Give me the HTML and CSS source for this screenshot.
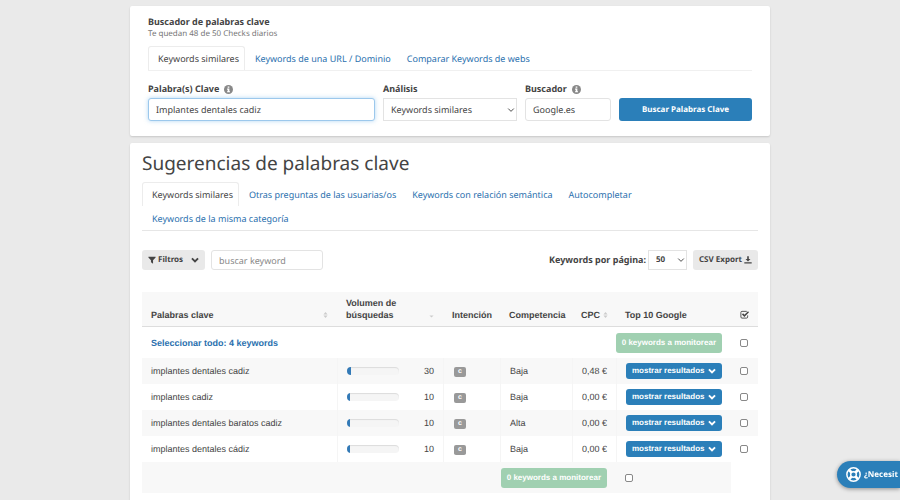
FILE: index.html
```html
<!DOCTYPE html>
<html lang="es">
<head>
    <meta charset="UTF-8">
    <meta name="viewport" content="width=device-width, initial-scale=1.0">
    <title>Buscador de palabras clave</title>
    <link rel="stylesheet" href="styles.css">
</head>
<body>
<svg class="sprite" aria-hidden="true">
    <symbol id="icon-info" viewBox="0 0 16 16">
        <circle cx="8" cy="8" r="8" fill="currentColor"/>
        <path d="M6.5 2.6h3v2.4h-3zM5.5 6.3h4v4.8h1.2v2H5.4v-2h1.2V8.3H5.5z" fill="#fff"/>
    </symbol>
    <symbol id="icon-arrow" viewBox="0 0 10 10">
        <path d="M1.500 3.200L5 6.700l3.500-3.500" fill="none" stroke="currentColor" stroke-width="1.200"/>
    </symbol>
    <symbol id="icon-chevron" viewBox="0 0 10 10">
        <path d="M1.200 3L5 6.800 8.800 3" fill="none" stroke="currentColor" stroke-width="2.400"/>
    </symbol>
    <symbol id="icon-filter" viewBox="0 0 10 10">
        <path d="M.5.8h9v1.200L6.300 5.300v4.400L3.700 7.900V5.300L.5 2z" fill="currentColor"/>
    </symbol>
    <symbol id="icon-download" viewBox="0 0 10 10">
        <path d="M4 .3h2v3.500h2.100L5 7 1.900 3.800H4zM.4 7.700h9.200v1.700H.4z" fill="currentColor"/>
    </symbol>
    <symbol id="icon-sort" viewBox="0 0 6 8">
        <path d="M3 0.500l2.500 3h-5zM3 7.500l2.500-3h-5z" fill="currentColor"/>
    </symbol>
    <symbol id="icon-sort-desc" viewBox="0 0 6 8">
        <path d="M3 7l2.500-2.500h-5z" fill="currentColor"/>
    </symbol>
    <symbol id="icon-check" viewBox="0 0 10 10">
        <path d="M7.500 1.500H2.200Q1 1.500 1 2.700v5Q1 9 2.200 9h5Q8.500 9 8.500 7.700V6" fill="none" stroke="currentColor"/>
        <path d="M2.800 4.300l2.100 2.200 4.600-4.600" fill="none" stroke="currentColor" stroke-width="1.700"/>
    </symbol>
    <symbol id="icon-help" viewBox="0 0 16 16">
        <circle cx="8" cy="8" r="7.100" fill="none" stroke="currentColor" stroke-width="1.600"/>
        <circle cx="8" cy="8" r="3" fill="none" stroke="currentColor" stroke-width="1.500"/>
        <path d="M3.300 3.300L6 6M12.700 3.300L10 6M3.300 12.700L6 10M12.700 12.700L10 10" stroke="currentColor" stroke-width="3"/>
    </symbol>
</svg>

<main class="container">
    <section class="panel search-panel">
        <h2 class="panel-title">Buscador de palabras clave</h2>
        <p class="panel-subtitle">Te quedan 48 de 50 Checks diarios</p>
        <nav class="tabs">
            <a href="#" class="tab active">Keywords similares</a>
            <a href="#" class="tab">Keywords de una URL / Dominio</a>
            <a href="#" class="tab">Comparar Keywords de webs</a>
        </nav>
        <form class="search-form">
            <div class="field">
                <label for="keyword">Palabra(s) Clave <svg class="icon-info"><use href="#icon-info"/></svg></label>
                <input type="text" id="keyword" class="control focused" value="Implantes dentales cadiz">
            </div>
            <div class="field">
                <label for="analysis">Análisis</label>
                <div class="select">
                    <select id="analysis" class="control">
                        <option>Keywords similares</option>
                    </select>
                    <svg class="select-arrow"><use href="#icon-arrow"/></svg>
                </div>
            </div>
            <div class="field">
                <label for="engine">Buscador <svg class="icon-info"><use href="#icon-info"/></svg></label>
                <input type="text" id="engine" class="control" value="Google.es">
            </div>
            <button type="button" class="btn btn-primary">Buscar Palabras Clave</button>
        </form>
    </section>

    <section class="panel results-panel">
        <h1>Sugerencias de palabras clave</h1>
        <nav class="tabs">
            <a href="#" class="tab active">Keywords similares</a>
            <a href="#" class="tab">Otras preguntas de las usuarias/os</a>
            <a href="#" class="tab">Keywords con relación semántica</a>
            <a href="#" class="tab">Autocompletar</a>
            <a href="#" class="tab">Keywords de la misma categoría</a>
        </nav>

        <div class="toolbar">
            <button type="button" class="btn btn-default">
                <svg class="icon"><use href="#icon-filter"/></svg>
                <span>Filtros</span>
                <svg class="icon icon-end"><use href="#icon-chevron"/></svg>
            </button>
            <input type="text" class="control filter-input" placeholder="buscar keyword" aria-label="buscar keyword">
            <div class="page-field">
                <label for="page-size">Keywords por página:</label>
                <div class="select page-size">
                    <select id="page-size" class="control">
                        <option>50</option>
                    </select>
                    <svg class="select-arrow"><use href="#icon-arrow"/></svg>
                </div>
            </div>
            <button type="button" class="btn btn-default">
                <span>CSV Export</span>
                <svg class="icon"><use href="#icon-download"/></svg>
            </button>
        </div>

        <table class="keywords">
            <colgroup>
                <col>
                <col class="col-volume">
                <col class="col-intent">
                <col class="col-competition">
                <col class="col-cpc">
                <col class="col-top">
                <col class="col-check">
            </colgroup>
            <thead>
                <tr>
                    <th><div class="head">Palabras clave <svg class="icon-sort"><use href="#icon-sort"/></svg></div></th>
                    <th><div class="head">Volumen de búsquedas <svg class="icon-sort"><use href="#icon-sort-desc"/></svg></div></th>
                    <th>Intención</th>
                    <th>Competencia</th>
                    <th><div class="head head-cpc">CPC <svg class="icon-sort"><use href="#icon-sort"/></svg></div></th>
                    <th>Top 10 Google</th>
                    <th><svg class="icon-check"><use href="#icon-check"/></svg></th>
                </tr>
            </thead>
            <tbody>
                <tr class="select-row">
                    <td colspan="6">
                        <div class="select-all">
                            <a href="#">Seleccionar todo: 4 keywords</a>
                            <button type="button" class="btn btn-success">0 keywords a monitorear</button>
                        </div>
                    </td>
                    <td><input type="checkbox" aria-label="Seleccionar todo"></td>
                </tr>
                <tr class="striped">
                    <td>implantes dentales cadiz</td>
                    <td><div class="volume"><div class="bar"><div class="bar-fill" style="width: 8%"></div></div><span>30</span></div></td>
                    <td><span class="badge">c</span></td>
                    <td>Baja</td>
                    <td class="number">0,48 €</td>
                    <td><button type="button" class="btn btn-primary btn-results">mostrar resultados <svg class="icon"><use href="#icon-chevron"/></svg></button></td>
                    <td><input type="checkbox" aria-label="implantes dentales cadiz"></td>
                </tr>
                <tr>
                    <td>implantes cadiz</td>
                    <td><div class="volume"><div class="bar"><div class="bar-fill" style="width: 6%"></div></div><span>10</span></div></td>
                    <td><span class="badge">c</span></td>
                    <td>Baja</td>
                    <td class="number">0,00 €</td>
                    <td><button type="button" class="btn btn-primary btn-results">mostrar resultados <svg class="icon"><use href="#icon-chevron"/></svg></button></td>
                    <td><input type="checkbox" aria-label="implantes cadiz"></td>
                </tr>
                <tr class="striped">
                    <td>implantes dentales baratos cadiz</td>
                    <td><div class="volume"><div class="bar"><div class="bar-fill" style="width: 6%"></div></div><span>10</span></div></td>
                    <td><span class="badge">c</span></td>
                    <td>Alta</td>
                    <td class="number">0,00 €</td>
                    <td><button type="button" class="btn btn-primary btn-results">mostrar resultados <svg class="icon"><use href="#icon-chevron"/></svg></button></td>
                    <td><input type="checkbox" aria-label="implantes dentales baratos cadiz"></td>
                </tr>
                <tr>
                    <td>implantes dentales cádiz</td>
                    <td><div class="volume"><div class="bar"><div class="bar-fill" style="width: 6%"></div></div><span>10</span></div></td>
                    <td><span class="badge">c</span></td>
                    <td>Baja</td>
                    <td class="number">0,00 €</td>
                    <td><button type="button" class="btn btn-primary btn-results">mostrar resultados <svg class="icon"><use href="#icon-chevron"/></svg></button></td>
                    <td><input type="checkbox" aria-label="implantes dentales cádiz"></td>
                </tr>
                <tr class="striped select-row">
                    <td colspan="5" class="number"><button type="button" class="btn btn-success">0 keywords a monitorear</button></td>
                    <td><input type="checkbox" aria-label="Seleccionar todo"></td>
                </tr>
            </tbody>
        </table>
    </section>
</main>

<button type="button" class="help-button">
    <svg class="icon-help"><use href="#icon-help"/></svg>
    <span>¿Necesit</span>
</button>
</body>
</html>
```
FILE: styles.css
```css
* {
    box-sizing: border-box;
}

body {
    margin: 0;
    background-color: #eaeaea;
    color: #444;
    font-family: "Noto Sans", sans-serif;
    font-size: 9px;
    line-height: 12px;
    text-rendering: geometricPrecision;
}

a {
    color: #2a70ae;
    text-decoration: none;
}

h1,
h2,
p {
    margin: 0;
}

input,
select,
button {
    font: inherit;
    color: inherit;
    text-rendering: inherit;
}

.sprite {
    display: none;
}

.container {
    display: flex;
    flex-direction: column;
    gap: 7px;
    max-width: 640px;
    min-height: 100vh;
    margin: 0 auto;
    padding-top: 6px;
}

.panel {
    background-color: #fff;
    border-radius: 2px;
    box-shadow: 0 1px 2px rgba(0, 0, 0, 0.15);
}

.search-panel {
    padding: 10px 18px 15px;
}

.results-panel {
    flex: 1;
    padding: 6px 12px 12px;
}

.panel-title {
    font-size: 9px;
    font-weight: bold;
}

.panel-subtitle {
    color: #777;
    font-size: 8px;
}

h1 {
    font-size: 19px;
    font-weight: normal;
    line-height: 28px;
}

/* Tabs */
.tabs {
    display: flex;
    flex-wrap: wrap;
    border-bottom: 1px solid #f0f0f0;
}

.search-panel .tabs {
    margin-top: 6px;
}

.results-panel .tabs {
    margin-top: 5px;
    border-color: #e6e6e6;
}

.tab {
    padding: 6px 5px 5px 9px;
    border: 1px solid transparent;
    border-bottom: 0;
    border-radius: 3px 3px 0 0;
}

.tab.active {
    color: #444;
    border-color: #ececec;
}

/* Controls */
.search-form {
    display: grid;
    grid-template-columns: 227fr 134fr 86fr 133fr;
    gap: 8px;
    align-items: end;
    margin-top: 12px;
}

.field label {
    display: flex;
    align-items: center;
    gap: 5px;
    margin-bottom: 3px;
    font-weight: bold;
}

.control {
    display: block;
    width: 100%;
    height: 23px;
    padding: 0 7px;
    background-color: #fff;
    border: 1px solid #e3e3e3;
    border-radius: 3px;
    outline: none;
}

.control.focused {
    border-color: #9cc8ec;
    box-shadow: 0 0 4px rgba(102, 175, 233, 0.5);
}

.select {
    position: relative;
}

.select .control {
    appearance: none;
    border-radius: 0;
}

.select-arrow {
    position: absolute;
    top: 50%;
    right: 2px;
    width: 8px;
    height: 8px;
    transform: translateY(-50%);
    pointer-events: none;
}

.btn {
    padding: 0 6px;
    border: 0;
    border-radius: 3px;
    font-size: 8px;
    font-weight: bold;
    white-space: nowrap;
    cursor: pointer;
}

.btn-primary {
    height: 23px;
    background-color: #2b7fb9;
    color: #fff;
}

.btn-default {
    display: flex;
    align-items: center;
    gap: 2px;
    height: 20px;
    background-color: #e9e9e9;
}

.btn-success {
    height: 20px;
    background-color: #a0d0b1;
    color: #fff;
}

.icon {
    flex: none;
    width: 8px;
    height: 8px;
}

.icon-info {
    width: 9px;
    height: 9px;
    color: #888;
}

.toolbar {
    display: flex;
    align-items: center;
    gap: 6px;
    margin: 19px 0 22px;
}

.toolbar .control {
    height: 20px;
}

.icon-end {
    margin-left: 6px;
}

.filter-input {
    width: 112px;
}

.filter-input::placeholder {
    color: #888;
}

.page-field {
    display: flex;
    align-items: center;
    gap: 2px;
    margin-left: auto;
    font-weight: bold;
}

.page-size {
    width: 39px;
    font-size: 8px;
}

/* Keywords table */
.keywords {
    width: 100%;
    table-layout: fixed;
    border-collapse: separate;
    border-spacing: 0;
    font-family: "Liberation Sans", Arial, sans-serif;
}

.col-volume { width: 106px; }
.col-intent { width: 57px; }
.col-competition { width: 72px; }
.col-cpc { width: 44px; }
.col-top { width: 115px; }
.col-check { width: 27px; }

.keywords th {
    padding: 5px 9px;
    background-color: #f8f8f8;
    border-bottom: 1px solid #ddd;
    text-align: left;
    vertical-align: bottom;
}

.keywords td {
    height: 26px;
    padding: 0 9px;
}

.keywords td + td {
    border-left: 1px solid #f5f5f5;
}

.keywords td:last-child,
.keywords .select-row td {
    border-left: 0;
}

.keywords .select-row td {
    height: 31px;
}

.striped td {
    background-color: #f8f8f8;
}

.keywords .number {
    text-align: right;
    white-space: nowrap;
}

.head {
    display: flex;
    align-items: flex-end;
    justify-content: space-between;
}

.keywords .head-cpc {
    justify-content: flex-start;
    gap: 3px;
}

.icon-sort {
    flex: none;
    width: 5px;
    height: 8px;
    margin-bottom: 2px;
    color: #ccc;
}

.icon-check {
    display: block;
    width: 9px;
    height: 9px;
    margin-bottom: 2px;
}

.select-all,
.volume {
    display: flex;
    align-items: center;
    justify-content: space-between;
}

.select-all a {
    font-weight: bold;
}

.bar {
    width: 52px;
    height: 8px;
    overflow: hidden;
    background-color: #f5f5f5;
    border-radius: 4px;
    box-shadow: inset 0 1px 1px rgba(0, 0, 0, 0.1);
}

.bar-fill {
    height: 100%;
    background-color: #337ab7;
}

.badge {
    display: block;
    width: 12px;
    height: 10px;
    margin: 2px 0 0 1px;
    background-color: #999;
    border-radius: 2px;
    color: #fff;
    font-size: 7px;
    font-weight: bold;
    line-height: 9px;
    text-align: center;
}

.btn-results {
    display: flex;
    align-items: center;
    justify-content: space-between;
    width: 100%;
    height: 16px;
}

.keywords input {
    display: block;
    width: 8px;
    height: 8px;
    margin: 0;
    appearance: none;
    background-color: #fff;
    border: 1px solid #888;
    border-radius: 2px;
}

.help-button {
    position: fixed;
    right: 0;
    bottom: 12px;
    display: flex;
    align-items: center;
    gap: 3px;
    width: 63px;
    height: 27px;
    padding: 0 0 0 9px;
    background-color: #2b7fb9;
    border: 0;
    border-radius: 14px 0 0 14px;
    box-shadow: 0 1px 4px rgba(0, 0, 0, 0.4);
    color: #fff;
    font-size: 8px;
    font-weight: bold;
    white-space: nowrap;
    cursor: pointer;
}

.icon-help {
    flex: none;
    width: 15px;
    height: 15px;
}
```
